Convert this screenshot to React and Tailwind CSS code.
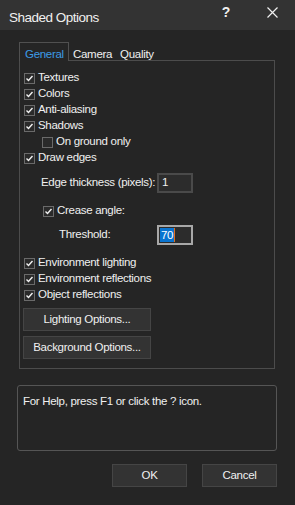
import React from 'react';

const font = { fontFamily: '"Liberation Sans", Arial, sans-serif' };

function Box({ checked }) {
    return (
        <span className="w-[11px] h-[11px] border border-[#6a6a6a] bg-[#2a2a2a] flex items-center justify-center shrink-0">
            {checked && (
                <svg width="9" height="9" viewBox="0 0 9 9">
                    <path d="M1.5 4.5 L3.5 6.5 L7.5 2" stroke="#f2f2f2" strokeWidth="1.4" fill="none" />
                </svg>
            )}
        </span>
    );
}

function Check({ label, checked = true, indent = '' }) {
    return (
        <div className={`h-4 flex items-center gap-[3px] whitespace-nowrap ${indent}`}>
            <Box checked={checked} />
            <span>{label}</span>
        </div>
    );
}

function Btn({ children, className = '' }) {
    return (
        <div className={`h-[23px] border border-[#454545] bg-[#333333] flex items-center justify-center whitespace-nowrap ${className}`}>
            {children}
        </div>
    );
}

export default function App() {
    return (
        <div className="w-[295px] h-[505px] bg-[#252525] text-[#f0f0f0] text-[11.5px] tracking-[-0.3px] flex flex-col overflow-hidden" style={font}>
            {/* Title bar */}
            <div className="h-[30px] bg-[#333333] flex items-center shrink-0">
                <span className="pl-[9px] pt-[7px] text-[13.5px] tracking-[-0.5px] flex-1">Shaded Options</span>
                <span className="text-[14px] font-bold mb-[6px] mr-[37px]">?</span>
                <svg width="11" height="11" viewBox="0 0 11 11" className="mr-[17px] mb-[6px]">
                    <path d="M0.5 0.5 L10.5 10.5 M10.5 0.5 L0.5 10.5" stroke="#f0f0f0" strokeWidth="1.2" />
                </svg>
            </div>

            {/* Tabs */}
            <div className="ml-[19px] w-[256px] mt-[12px] flex flex-col">
                <div className="h-[18px] flex items-end">
                    <div className="h-[19px] w-[50px] border border-b-0 border-[#505050] bg-[#252525] text-[#3d9be6] pl-[5px] pt-[3px] relative top-[1px]">General</div>
                    <span className="ml-[4px] self-start pt-[4px]">Camera</span>
                    <span className="ml-[8px] self-start pt-[4px]">Quality</span>
                </div>
                <div className="h-[309px] border border-[#4c4c4c] flex flex-col pl-[4px] pt-[9px]">
                    <Check label="Textures" />
                    <Check label="Colors" />
                    <Check label="Anti-aliasing" />
                    <Check label="Shadows" />
                    <Check label="On ground only" checked={false} indent="ml-[18px]" />
                    <Check label="Draw edges" />
                    <div className="mt-[7px] h-[20px] flex items-center whitespace-nowrap">
                        <span className="ml-[17px] w-[116px]">Edge thickness (pixels):</span>
                        <div className="w-[36px] h-[20px] border-2 border-[#4a4a4a] bg-[#2c2c2c] flex items-center pl-[3px]">1</div>
                    </div>
                    <div className="mt-[10px]">
                        <Check label="Crease angle:" indent="ml-[19px]" />
                    </div>
                    <div className="mt-[6px] h-[20px] flex items-center">
                        <span className="ml-[35px] w-[98px]">Threshold:</span>
                        <div className="w-[36px] h-[20px] border-2 border-[#a8a8a8] bg-[#2c2c2c] flex items-center pl-[1px]">
                            <span className="bg-[#0a74d0] text-white px-[1px] leading-[14px]">70</span>
                            <span className="w-px h-[14px] bg-[#e07020]" />
                        </div>
                    </div>
                    <div className="mt-[10px]">
                        <Check label="Environment lighting" />
                        <Check label="Environment reflections" />
                        <Check label="Object reflections" />
                    </div>
                    <Btn className="mt-[5px] w-[128px] -ml-px">Lighting Options...</Btn>
                    <Btn className="mt-[5px] w-[128px] -ml-px">Background Options...</Btn>
                </div>
            </div>

            {/* Help */}
            <div className="ml-[17px] w-[260px] h-[66px] mt-[16px] border border-[#555555] rounded-[3px] px-[5px] pt-[7px]">
                For Help, press F1 or click the ? icon.
            </div>

            {/* Footer */}
            <div className="flex justify-end gap-[15px] mr-[18px] mt-[13px]">
                <Btn className="w-[75px]">OK</Btn>
                <Btn className="w-[75px]">Cancel</Btn>
            </div>
        </div>
    );
}
